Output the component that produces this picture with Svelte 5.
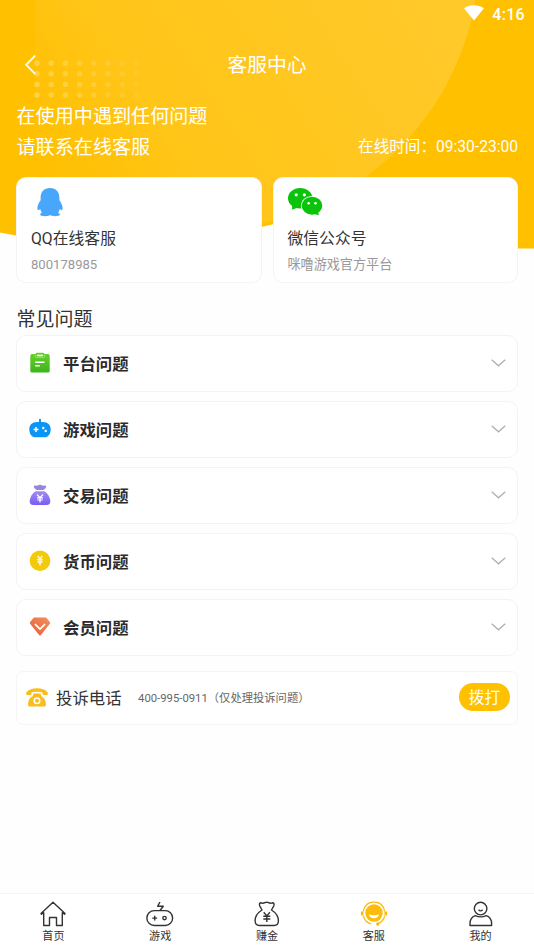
<script lang="ts">
// Help centre: contact cards, FAQ groups, complaint line and the tab bar.

const faqs = [
  { icon: "clipboard", title: "平台问题" },
  { icon: "gamepad", title: "游戏问题" },
  { icon: "pouch", title: "交易问题" },
  { icon: "coin", title: "货币问题" },
  { icon: "gem", title: "会员问题" },
];

const tabs = [
  { icon: "home", label: "首页" },
  { icon: "game", label: "游戏" },
  { icon: "earn", label: "赚金" },
  { icon: "service", label: "客服" },
  { icon: "me", label: "我的" },
];

// Fading dot grid behind the back arrow
const dots = Array.from({ length: 32 }, (_, i) => ({
  x: 37 + (i % 8) * 14.2,
  y: 63.2 + Math.floor(i / 8) * 10.6,
  opacity: 0.42 - (i % 8) * 0.042,
}));

let active = $state("service");
</script>

<div class="screen">
  <svg class="backdrop" width="534" height="250" viewBox="0 0 534 250" aria-hidden="true">
    <defs>
      <linearGradient id="glow" gradientUnits="userSpaceOnUse" x1="110" y1="200" x2="430" y2="-10">
        <stop offset="0" stop-color="#ffc412" />
        <stop offset="1" stop-color="#ffc92a" />
      </linearGradient>
      <linearGradient id="glowEdge" gradientUnits="userSpaceOnUse" x1="0" y1="120" x2="110" y2="50">
        <stop offset="0" stop-color="#ffc000" />
        <stop offset="1" stop-color="#ffc000" stop-opacity="0" />
      </linearGradient>
      <clipPath id="wave">
        <path d="M0 0H534V248.500H517C430 247 345 205 272 224.500L261 227C180 250 90 250 0 232.500Z" />
      </clipPath>
      <clipPath id="inner"><rect x="35" width="499" height="250" /></clipPath>
    </defs>
    <g clip-path="url(#wave)">
      <rect width="534" height="250" fill="#ffc000" />
      <g clip-path="url(#inner)">
        <circle cx="205" cy="-45" r="274" fill="url(#glow)" />
        <circle cx="205" cy="-45" r="274" fill="url(#glowEdge)" />
      </g>
    </g>
    {#each dots as d}
      <circle cx={d.x} cy={d.y} r="2.700" fill="#ffe9a3" opacity={d.opacity} />
    {/each}
  </svg>

  <div class="status">
    <svg width="20" height="16" viewBox="0 0 20 16"><path d="M0 3.200C5.500-.8 14.500-.8 20 3.200L10 15.500Z" fill="#fff" /></svg>
    <span>4:16</span>
  </div>

  <header>
    <button class="back" aria-label="返回">
      <svg width="12" height="20" viewBox="0 0 12 20"><path d="M11.200.600L2.200 9.800l9.000 9" fill="none" stroke="#fff" stroke-width="1.900" /></svg>
    </button>
    <h1>客服中心</h1>
  </header>

  <section class="intro">
    <p>在使用中遇到任何问题<br />请联系在线客服</p>
    <span class="hours">在线时间：09:30-23:00</span>
  </section>

  <section class="contacts">
    <div class="contact">
      <svg class="qq" width="26" height="29" viewBox="0 0 26 29">
        <path d="M13 0C7 0 3.600 4 3.600 9.500v2.700C2 14.500.4 17.300.4 20c0 2 .8 2.700 1.600 1.800l1.500-.6c.3 1.800.6 2.600 1.400 3.500-1.100.5-1.800 1.100-1.800 1.900 0 1.300 2.300 1.600 5 1.600 2 0 3.500-.3 4.300-.9h1.200c.8.600 2.300.9 4.300.9 2.700 0 5-.3 5-1.600 0-.8-.7-1.400-1.800-1.900.8-.9 1.100-1.700 1.400-3.500l1.500.6c.8.900 1.600.2 1.600-1.800 0-2.700-1.600-5.500-3.200-7.800V9.500C22.400 4 19 0 13 0Z" fill="#48a7fa" />
      </svg>
      <h2>QQ在线客服</h2>
      <p>800178985</p>
    </div>
    <div class="contact">
      <svg class="wechat" width="35" height="29" viewBox="0 0 35 29">
        <ellipse cx="12.200" cy="10.300" rx="12.200" ry="10.300" fill="#0bc30b" />
        <path d="M4 16l.2 5.800 5.800-2.400Z" fill="#0bc30b" />
        <ellipse cx="24" cy="17.700" rx="11" ry="9.700" fill="#fff" />
        <ellipse cx="24" cy="17.700" rx="10.300" ry="9" fill="#0bc30b" />
        <path d="M26 26l4.800 1.300-.8-4Z" fill="#0bc30b" />
        <g fill="#fff">
          <circle cx="8.200" cy="6.800" r="1.600" /><circle cx="16.400" cy="6.800" r="1.600" />
          <circle cx="20.700" cy="15.200" r="1.300" /><circle cx="27.500" cy="15.200" r="1.300" />
        </g>
      </svg>
      <h2>微信公众号</h2>
      <p>咪噜游戏官方平台</p>
    </div>
  </section>

  <h2 class="heading">常见问题</h2>

  <ul class="faqs">
    {#each faqs as faq (faq.icon)}
      <li>
        <svg class="faq-icon" width="22" height="22" viewBox="0 0 22 22">
          {#if faq.icon === "clipboard"}
            <defs><linearGradient id="green" x2="0" y2="1"><stop stop-color="#6bd12c" /><stop offset="1" stop-color="#3bb51b" /></linearGradient></defs>
            <path d="M3 2h3.500q.3-1.300 1.700-1.300h5.600Q15.200.7 15.500 2H19q1.700 0 1.700 1.700v15.200q0 1.700-1.700 1.700H3q-1.700 0-1.700-1.700V3.700Q1.300 2 3 2Z" fill="url(#green)" />
            <path d="M8 3.600h6M6.200 10.300h9.300M6.200 13.700h4.600" fill="none" stroke="#fff" stroke-width="1.500" />
            <path d="M6.200 2.400v2.200q0 .8.800.8h8q.8 0 .8-.8V2.400" fill="none" stroke="#a9e58a" stroke-width=".7" />
          {:else if faq.icon === "gamepad"}
            <path d="M10 4V1.300q1-1 2 0V4H14c4.700 0 7.700 3 7.700 7.300 0 4.200-2.200 8-5.500 8H5.800C2.500 19.300.3 15.500.3 11.300.3 7 3.300 4 8 4Z" fill="#0b96f5" />
            <path d="M7 8.900v5M4.500 11.400h5" stroke="#fff" stroke-width="1.500" />
            <circle cx="14.300" cy="10" r="1.200" fill="#fff" /><circle cx="16.700" cy="12.900" r="1.200" fill="#fff" />
          {:else if faq.icon === "pouch"}
            <defs><linearGradient id="violet" x2="0" y2="1"><stop stop-color="#a38bf0" /><stop offset="1" stop-color="#795cf5" /></linearGradient></defs>
            <path d="M5 2C6.500 1.200 7.500 2 8.600 1.500c1.300-1 3.500-1 4.800 0C14.500 2 15.500 1.200 17 2c.8 1.200-.8 3-2.600 4H7.600C5.800 5 4.200 3.200 5 2Z" fill="#9985df" />
            <path d="M6.700 7.300h8.600c3.300 1.700 6 6.200 6 10.200q0 3.400-3.600 3.400H4.300Q.7 20.900.7 17.500C.7 13.500 3.400 9 6.700 7.300Z" fill="url(#violet)" />
            <path d="M8 10.500l3 3.200 3-3.200M11 13.700v4.800M8 13.900h6M8.300 16h5.400" fill="none" stroke="#fff" stroke-width="1.200" />
          {:else if faq.icon === "coin"}
            <circle cx="11" cy="10.700" r="10.300" fill="#f3ca09" />
            <path d="M8.800 6l2.200 3.300L13.200 6M11 9.300v6M8.200 9.800h5.600M8.500 12.100h5" fill="none" stroke="#fff8d8" stroke-width="1.600" />
          {:else}
            <defs><linearGradient id="orange" x1="1" y1="0" x2="0" y2="1"><stop stop-color="#ee9361" /><stop offset="1" stop-color="#f05a30" /></linearGradient></defs>
            <path d="M5.600 1.500h10.800q.8 0 1.200.6l3.400 4.100q.6.900-.1 1.600l-9 11.300q-.9 1-1.800 0L1.100 7.800Q.4 7.100 1 6.200L4.400 2.100q.4-.6 1.200-.6Z" fill="url(#orange)" />
            <path d="M6 8.200l5 4.900 5-4.900" fill="none" stroke="#fff" stroke-width="1.700" />
          {/if}
        </svg>
        <span>{faq.title}</span>
        <svg class="chevron" width="15" height="8" viewBox="0 0 15 8"><path d="M.7.800l6.800 6 6.800-6" fill="none" stroke="#b0b0b0" stroke-width="1.300" /></svg>
      </li>
    {/each}
  </ul>

  <section class="complaint">
    <svg width="22" height="19" viewBox="0 0 22 19">
      <path d="M.3 6.400V4.300C2.500 1.500 6.500.3 11 .3s8.500 1.200 10.700 4v2.100q0 .7-.7.7h-3.600q-.8 0-.8-.8V4.500C13.500 3.500 8.500 3.500 5.400 4.500v1.800q0 .8-.8.800H1q-.7 0-.7-.7Z" fill="#f9bd1c" />
      <path d="M7.500 5.500h7q.3 2.400 2 3.500c2.500 1.500 3.400 4 3.400 8q0 1.500-1.500 1.500H3.600Q2.100 18.500 2.100 17c0-4 .9-6.500 3.400-8Q7.200 7.900 7.500 5.500Z" fill="#f9bd1c" />
      <circle cx="11" cy="12.800" r="2.800" fill="none" stroke="#fff" stroke-width="1.500" />
    </svg>
    <strong>投诉电话</strong>
    <span>400-995-0911（仅处理投诉问题）</span>
    <button>拨打</button>
  </section>

  <nav>
    {#each tabs as tab (tab.icon)}
      <button onclick={() => (active = tab.icon)} aria-current={active === tab.icon ? "page" : undefined}>
        <svg width="28" height="26" viewBox="0 0 28 26" fill="none" stroke="#333" stroke-width="1.400" stroke-linejoin="round">
          {#if tab.icon === "home"}
            <path d="M4.700 11.700L2.500 13.200 2 12.600 14 1.300l12 11.300-.5.600-2.200-1.500V24.500h-5.800v-8h-7v8H4.700Z" />
          {:else if tab.icon === "game"}
            <rect x=".9" y="9.600" width="25.700" height="14.900" rx="7.300" />
            <path d="M14 9.500l3.300-4.300h-5.600L14 1M8.700 14.700v4.800M6.300 17.100h4.800" />
            <circle cx="18.500" cy="17.100" r="1.700" />
          {:else if tab.icon === "earn"}
            <path d="M9 9L6.700 4.800Q5.700 2 8.200 1.800q2 .9 3.600-.2 2-.6 3.900 0 1.600 1.100 3.600.2 2.500.2 1.500 3L18.500 9c3.900 2.400 6.900 6 6.900 10.800q0 4.700-4.300 4.700H6.400q-4.300 0-4.300-4.700C2.100 15 5.100 11.400 9 9Z" />
            <path d="M10.700 11.300l3.100 3.600 3.100-3.600M13.800 14.900v6M10.300 15.200h7M10.300 18h7" />
          {:else if tab.icon === "service"}
            <g stroke="#fbb90a">
              <circle cx="14" cy="12" r="8.700" fill="#fdbb0c" stroke="none" />
              <path d="M3.300 10.500C4.300 4.500 8.500 1.100 14 1.100S23.700 4.500 24.700 10.500" stroke-width="1.300" />
              <path d="M2.200 10.500v4M25.800 10.500v4" stroke-width="2.600" />
              <path d="M24.700 15c-1 3.800-3.200 6.300-6.700 7.800M3.300 15c1.300 4.500 4 7 8 8" stroke-width="1.200" />
              <circle cx="17.800" cy="23" r="1.700" fill="#fbb90a" stroke="none" />
              <path d="M8.900 13.600q5.100 1.400 10.200 0c-.6 2.600-2.400 3.700-5.100 3.700s-4.500-1.100-5.100-3.700Z" fill="#fff" stroke="none" />
            </g>
          {:else}
            <circle cx="13.600" cy="7.600" r="6.300" />
            <path d="M11.600 8.700q2 2.400 4 0M8.300 14.600C5 15.800 3 18.500 3 22.500v2h21.600v-2c0-4-2-6.700-5.300-7.900-3.300 1.500-7.700 1.500-11 0Z" />
          {/if}
        </svg>
        <span>{tab.label}</span>
      </button>
    {/each}
  </nav>
</div>

<style>
:global(body) {
  background: #fefefe;
}

.screen {
  position: relative;
  display: flex;
  flex-direction: column;
  box-sizing: border-box;
  width: 534px;
  height: 949px;
  overflow: hidden;
  background: #fefefe;
  color: #333;
  font-family: Roboto, "Noto Sans CJK SC", sans-serif;
}
.screen > :not(.backdrop) {
  position: relative;
}
.backdrop {
  position: absolute;
  top: 0;
  left: 0;
}
h1,
h2,
p,
ul {
  margin: 0;
  padding: 0;
  font-weight: 400;
}
button {
  appearance: none;
  border: none;
  background: none;
  padding: 0;
  font: inherit;
  color: inherit;
}
svg {
  display: block;
  flex: none;
}

.status {
  display: flex;
  justify-content: flex-end;
  align-items: center;
  gap: 8px;
  height: 28px;
  padding-right: 9px;
  color: #fff;
  font-size: 16px;
  font-weight: 500;
  letter-spacing: 0.3px;
}
.status svg {
  margin-top: -2px;
}

header {
  display: grid;
  grid-template-columns: 60px 1fr 60px;
  align-items: center;
  height: 73px;
  color: #fff;
}
.back {
  padding-left: 24px;
}
h1 {
  padding-top: 3px;
  text-align: center;
  font-size: 19.8px;
  line-height: 28px;
}

.intro {
  display: flex;
  justify-content: space-between;
  align-items: flex-end;
  height: 76px;
  box-sizing: border-box;
  padding: 0 16px 14px 16.5px;
  color: #fff;
}
.intro p {
  font-size: 19.1px;
  line-height: 31px;
}
.hours {
  font-size: 15.6px;
  line-height: 31px;
}

.contacts {
  display: grid;
  grid-template-columns: 1fr 1fr;
  gap: 11px;
  padding: 0 16px;
}
.contact {
  height: 106px;
  box-sizing: border-box;
  padding: 10px 14px 0;
  border: 1px solid #f3f3f3;
  border-radius: 10px;
  background: #fff;
}
.qq {
  margin-left: 6px;
}
.contact h2 {
  margin-top: 10px;
  font-size: 15.8px;
  line-height: 24px;
}
.contact p {
  margin-top: 4px;
  color: #999;
  font-size: 13.1px;
  line-height: 20px;
}

.heading {
  margin: 23px 16.5px 0;
  font-size: 19px;
  line-height: 28px;
}

.faqs {
  display: flex;
  flex-direction: column;
  gap: 9px;
  margin: 1px 16px 0;
  list-style: none;
}
.faqs li {
  display: flex;
  align-items: center;
  height: 57px;
  box-sizing: border-box;
  padding: 0 11px 1px 12px;
  border: 1px solid #f3f3f3;
  border-radius: 10px;
  background: #fff;
}
.faqs span {
  margin-left: 12px;
  padding-top: 4px;
  color: #2b2b2b;
  font-size: 16.4px;
  font-weight: 700;
  line-height: 24px;
}
.chevron {
  margin-left: auto;
}

.complaint {
  display: flex;
  align-items: center;
  height: 54px;
  box-sizing: border-box;
  margin: 15px 16px 0;
  padding: 0 7px 2px 9px;
  border: 1px solid #f5f5f5;
  border-radius: 7px;
  background: #fff;
}
.complaint strong {
  margin-left: 8px;
  font-size: 16.4px;
  font-weight: 400;
}
.complaint span {
  margin-left: 16.5px;
  color: #666;
  font-size: 11.3px;
}
.complaint button {
  width: 51px;
  height: 28px;
  margin-left: auto;
  border-radius: 14px;
  background: #ffc000;
  color: #fff;
  font-size: 15.7px;
  line-height: 29px;
}

nav {
  display: grid;
  grid-template-columns: repeat(5, 1fr);
  height: 56px;
  box-sizing: border-box;
  margin-top: auto;
  border-top: 1px solid #f3f3f3;
  background: #fff;
}
nav button {
  display: flex;
  flex-direction: column;
  align-items: center;
  padding-top: 7px;
}
nav span {
  margin-top: 2px;
  font-size: 11.1px;
  line-height: 16px;
}
</style>
